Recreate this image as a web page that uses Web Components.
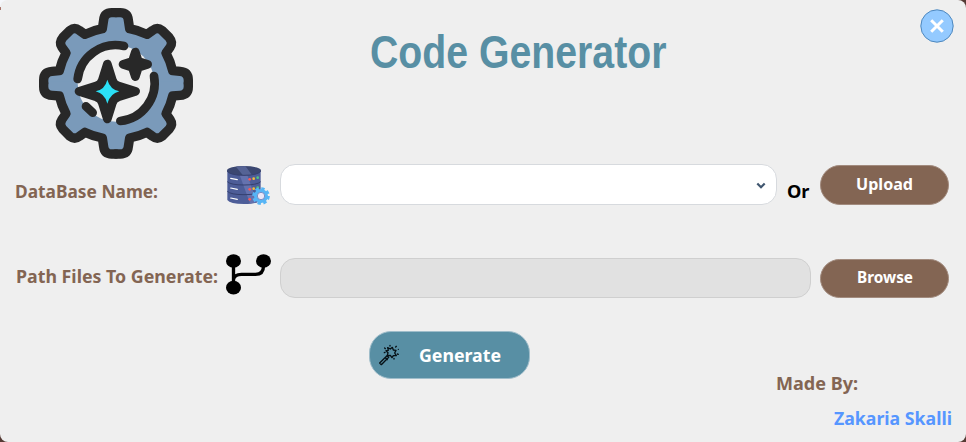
<!DOCTYPE html>
<html lang="en">
<head>
<meta charset="utf-8">
<title>Code Generator</title>
<style>
html,body{margin:0;width:966px;height:442px;overflow:hidden}
body{background:linear-gradient(135deg,#f5f7fb 0 7px,#553a34 30px);font-family:"Noto Sans","Open Sans",sans-serif}
</style>
</head>
<body>
<generator-window></generator-window>
<script>
class TextRun extends HTMLElement {
  connectedCallback() {
    const w = this.getAttribute('width'), s = this.getAttribute('size') || 18;
    const root = this.attachShadow({mode: 'open'});
    root.innerHTML = `<style>:host{display:block;flex:none;width:${w}px;height:24px}svg{display:block;overflow:visible}
      text{font-family:var(--face,"Noto Sans"),sans-serif;font-weight:700;font-size:${s}px;fill:currentColor}</style>
      <svg width="${w}" height="24"><text x="0" y="18" textLength="${w}" lengthAdjust="spacingAndGlyphs"></text></svg>`;
    root.querySelector('text').textContent = this.getAttribute('text');
  }
}
customElements.define('text-run', TextRun);

const define = (name, markup) => customElements.define(name, class extends HTMLElement {
  constructor() {
    super();
    const t = document.createElement('template');
    t.innerHTML = markup;
    this.attachShadow({mode: 'open'}).append(t.content.cloneNode(true));
  }
});

define('gear-logo', `<style>:host{display:block;flex:none;width:170px;height:165px}svg{display:block}</style>
<svg width="170" height="165" viewBox="0 0 510 495" fill="none" stroke="#282828" stroke-linecap="round" stroke-linejoin="round">
<defs>
<path id="f" stroke="none" fill="#7a9aba" d="M264 38H245Q223 38 221 60L217 86Q190 91 165 103L148 91Q134 80 120 91L98 113Q86 127 96 142L108 159Q94 185 88 212L66 214Q41 216 41 240V256H264Z"/>
<path id="q" stroke-width="28" d="M258 38H245Q223 38 221 60L217 86Q190 91 165 103L148 91Q134 80 120 91L98 113Q86 127 96 142L108 159Q94 185 88 212L66 214Q41 216 41 240V250"/>
</defs>
<use href="#f"/><use href="#f" transform="matrix(-1 0 0 1 516 0)"/><use href="#f" transform="matrix(1 0 0 -1 0 500)"/><use href="#f" transform="matrix(-1 0 0 -1 516 500)"/>
<use href="#q"/><use href="#q" transform="matrix(-1 0 0 1 516 0)"/><use href="#q" transform="matrix(1 0 0 -1 0 500)"/><use href="#q" transform="matrix(-1 0 0 -1 516 500)"/>
<circle cx="258" cy="250" r="115" fill="#efefef" stroke="none"/>
<g stroke-width="26"><path d="M143 237A115 115 0 0 1 282 138M372 228A115 115 0 0 1 271 363M168 319L188 338"/>
<path fill="#282828" d="M232 192L247 240Q251 254 265 258L317 274L265 291Q251 295 247 309L232 357L217 309Q213 295 199 291L147 274L199 258Q213 254 217 240Z"/>
<path fill="#282828" d="M316 156L325 184L353 193L325 202L316 230L307 202L279 193L307 184Z"/></g>
<path fill="#2be0f6" stroke="none" d="M232 239Q240 268 268 274Q240 281 232 311Q225 281 197 274Q225 268 232 239Z"/>
</svg>`);

define('database-icon', `<style>:host{display:block;flex:none;width:45px;height:40px}svg{display:block}</style>
<svg width="45" height="40" viewBox="33 30 135 120">
<path d="M37 46V135Q45 147 87 147Q129 147 137 135V46Z" fill="#4d5d98"/>
<path d="M74 60L105 145L126 142L96 58Z" fill="#6572ae"/>
<ellipse cx="87" cy="47" rx="51" ry="14" fill="#3b4771"/><path d="M63 35L83 60H111L91 33Z" fill="#556395"/>
<g fill="none" stroke="#35406f" stroke-width="3"><path d="M37 49Q47 61 87 61T137 49M37 80Q47 90 87 90T137 80M37 109Q47 119 87 119T137 109"/></g>
<path d="M47 70L67 74M47 99L67 103M47 129L67 133" stroke="#fff" stroke-width="3.4" stroke-linecap="round"/>
<g fill="#ff5757"><circle cx="104" cy="73" r="4"/><circle cx="104" cy="103" r="4"/><circle cx="104" cy="133" r="4"/></g>
<g fill="#f4bd38"><circle cx="116" cy="71" r="4"/><circle cx="116" cy="101" r="4"/></g><g fill="#50c783"><circle cx="128" cy="68" r="4"/><circle cx="128" cy="98" r="4"/></g>
<circle cx="138" cy="123" r="22" fill="none" stroke="#57b5f5" stroke-width="9" stroke-dasharray="10 7.28"/>
<circle cx="138" cy="123" r="15.5" fill="#e9e7f8" stroke="#57b5f5" stroke-width="11"/><circle cx="138" cy="123" r="11" fill="#e9e7f8" stroke="#5968aa" stroke-width="2"/>
</svg>`);

define('branch-icon', `<style>:host{display:block;flex:none;width:46px;height:41px}svg{display:block}</style>
<svg width="46" height="41" viewBox="33.5 26 138 123"><g fill="#000"><ellipse cx="56" cy="47" rx="22.5" ry="20.5"/><ellipse cx="146" cy="47" rx="22.5" ry="20.5"/><ellipse cx="56" cy="127" rx="22.5" ry="20.5"/></g>
<path d="M56 47V127M56 103Q58 87 80 87H122Q146 87 146 62" fill="none" stroke="#000" stroke-width="10"/></svg>`);

define('wand-icon', `<style>:host{display:block;flex:none;width:22px;height:22px}svg{display:block}</style>
<svg width="22" height="22" viewBox="54 66 66 66" fill="none" stroke="#061015" stroke-width="4" stroke-linejoin="round" stroke-linecap="round">
<path d="M59 123L81 101L86 106L64 128Z M78 109L82 113"/>
<path d="M83 77L91 81L97 76L100 84L108 85L104 93L109 101L100 101L96 107L91 100L82 101L84 92L78 86L85 85Z"/>
<path d="M90 70V72M74 78L76 80M107 75L109 73M115 82V82M112 96L115 97M102 109V111M73 92L75 91"/></svg>`);

define('pill-button', `<style>:host{display:flex;flex:none;box-sizing:border-box;width:129px;height:39.5px;border-radius:20px;background:#836553;border:1px solid #a28b7e;color:#fff}</style><slot></slot>`);

define('select-box', `<style>:host{display:flex;flex:none;box-sizing:border-box;width:497px;height:41px;border:1px solid #d7dade;border-radius:15px;background:#fff;justify-content:flex-end;padding:17px 10px 0 0}</style>
<svg width="10" height="8" viewBox="0 0 10 8"><path d="M1.3 1.5L5 5.2L8.7 1.5" fill="none" stroke="#40566f" stroke-width="2.2"/></svg>`);

define('path-box', `<style>:host{display:block;flex:none;box-sizing:border-box;width:531px;height:40px;border:1px solid #cfcfcf;border-radius:15px;background:#e1e1e1}</style>`);

define('close-button', `<style>:host{display:block;flex:none;width:34px;height:34px}svg{display:block}</style>
<svg width="34" height="34"><circle cx="17" cy="17" r="16.2" fill="#94caff" stroke="#4e87bd"/><path d="M11.2 11.2L22.8 22.8M22.8 11.2L11.2 22.8" stroke="#fff" stroke-width="3"/></svg>`);

define('generator-window', `<style>
:host{display:grid;grid-template-rows:164px 94px 73px 111px;width:966px;height:442px;background:linear-gradient(#a8746a,#a8746a) 0 7px/1px 3px no-repeat #efefef;border-radius:8px;overflow:hidden;color:#836553}
header,.row,.foot{display:flex;align-items:flex-start}
header{padding-left:30px;box-sizing:border-box}
.title{margin:50px 0 0 170px;color:#588fa4;--face:"Liberation Sans"}
close-button{margin:9px 12.5px 0 auto}
.row{padding-left:15px}
.or{color:#000}
.foot{justify-content:space-between;padding:0 14px 0 369px}
.generate{width:161px;height:48px;background:#588fa4;border-color:#9fbdca;border-radius:22px;padding:12px 0 0 8px}
.credit{display:flex;flex-direction:column;gap:11px;padding-top:41px}
</style>
<header><gear-logo></gear-logo><text-run class="title" text="Code Generator" width="296.5" size="46"></text-run><close-button></close-button></header>
<div class="row"><text-run style="margin:16px 68px 0 0" text="DataBase Name:" width="143"></text-run><database-icon style="margin:1px 9px 0 0"></database-icon><select-box></select-box><text-run class="or" style="margin:16px 10px 0 10px" text="Or" width="22.5"></text-run><pill-button style="margin-top:1px"><text-run style="margin:6px 0 0 35px" text="Upload" width="57" size="15.5"></text-run></pill-button></div>
<div class="row"><text-run style="margin:7px 7.5px 0 1px" text="Path Files To Generate:" width="202"></text-run><branch-icon style="margin:-4.5px 8.5px 0 0"></branch-icon><path-box></path-box><pill-button style="margin:.5px 0 0 8.5px"><text-run style="margin:5.5px 0 0 36px" text="Browse" width="56" size="15.5"></text-run></pill-button></div>
<div class="foot"><pill-button class="generate"><wand-icon></wand-icon><text-run style="margin-left:19px" text="Generate" width="82"></text-run></pill-button><div class="credit"><text-run style="margin-left:1px" text="Made By:" width="82"></text-run><text-run style="margin-left:59px;color:#5696ff" text="Zakaria Skalli" width="118"></text-run></div></div>`);
</script>
</body>
</html>
